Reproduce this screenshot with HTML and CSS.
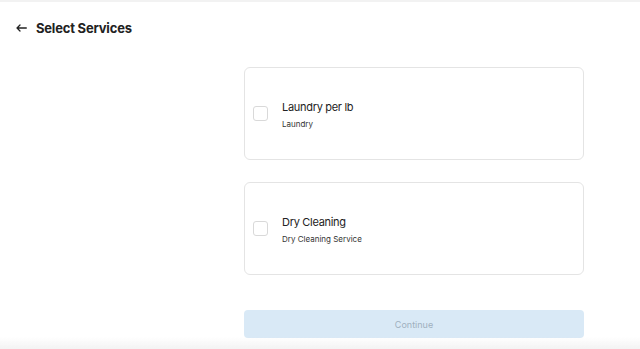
FILE: index.html
```html
<!DOCTYPE html>
<html lang="en">
<head>
  <meta charset="UTF-8" />
  <meta name="viewport" content="width=device-width, initial-scale=1.0"/>
  <title>Select Services</title>
  <link rel="stylesheet" href="styles.css">
</head>
<body>

  <header class="topbar">
    <button class="back-btn" aria-label="Back">
      <svg width="11" height="8" viewBox="0 0 11 8" fill="none" stroke="#222" stroke-width="1.3" stroke-linecap="round" stroke-linejoin="round">
        <path d="M10.3 4H1M4 1L1 4l3 3"/>
      </svg>
    </button>
    <h1>Select Services</h1>
  </header>

  <main class="services">
    <label class="service-card">
      <input type="checkbox" />
      <span class="service-text">
        <span class="service-name">Laundry per lb</span>
        <span class="service-desc">Laundry</span>
      </span>
    </label>

    <label class="service-card">
      <input type="checkbox" />
      <span class="service-text">
        <span class="service-name">Dry Cleaning</span>
        <span class="service-desc">Dry Cleaning Service</span>
      </span>
    </label>

    <button class="continue-btn" disabled>Continue</button>
  </main>

  <div class="bottom-fade"></div>

</body>
</html>
```

FILE: styles.css
```css
* { box-sizing: border-box; }

html, body {
  height: 100%;
}

body {
  margin: 0;
  font-family: Inter, "Noto Sans", sans-serif;
  background: #fff;
  color: #222;
  border-top: 2px solid #f2f2f2;
}

.topbar {
  display: flex;
  align-items: center;
  gap: 9px;
  padding: 15px 0 0 16px;
  height: 37px;
}

.back-btn {
  background: none;
  border: none;
  padding: 0;
  display: flex;
  align-items: center;
  cursor: pointer;
}

.topbar h1 {
  margin: 0;
  font-size: 13px;
  font-weight: 700;
  color: #222;
  letter-spacing: -0.2px;
}

.services {
  width: 340px;
  margin: 28px 0 0 244px;
  display: flex;
  flex-direction: column;
  gap: 22px;
}

.service-card {
  display: flex;
  align-items: center;
  gap: 14px;
  height: 93px;
  padding: 0 8px;
  border: 1px solid #e4e4e4;
  border-radius: 6px;
  cursor: pointer;
}

.service-card input {
  appearance: none;
  margin: 0;
  width: 15px;
  height: 15px;
  border: 1px solid #d9d9d9;
  border-radius: 3px;
  background: #fff;
  flex-shrink: 0;
}

.service-text {
  display: flex;
  flex-direction: column;
  gap: 5px;
  margin-top: 1px;
}

.service-name {
  font-size: 11px;
  letter-spacing: -0.3px;
  color: #222;
}

.service-desc {
  font-size: 8px;
  color: #333;
}

.continue-btn {
  margin-top: 13px;
  height: 28px;
  border: none;
  border-radius: 4px;
  background: #d9e9f6;
  color: #9fb0be;
  font-family: inherit;
  font-size: 9px;
}

.bottom-fade {
  position: fixed;
  left: 0;
  right: 0;
  bottom: 0;
  height: 12px;
  background: linear-gradient(to bottom, rgba(240, 240, 240, 0), #f3f3f3);
}
```
